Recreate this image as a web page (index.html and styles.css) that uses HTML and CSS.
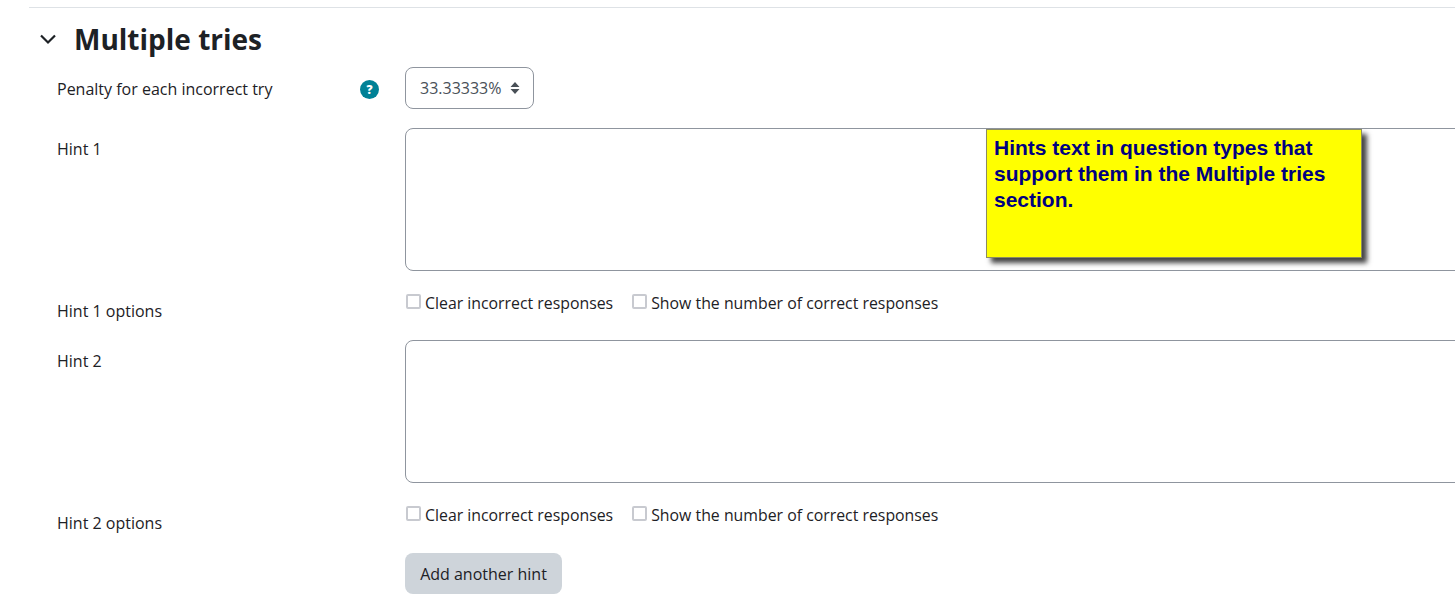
FILE: index.html
```html
<!DOCTYPE html>
<html>
<head>
	<meta charset="utf-8">
	<title>Multiple tries</title>
	<link rel="stylesheet" href="styles.css">
</head>
<body>
	<div class="section">
		<h3 class="section_head">
			<svg class="chevron" width="18" height="12" viewBox="0 0 18 12"><path d="M2 2.5 L9 9.5 L16 2.5" fill="none" stroke="#1d2125" stroke-width="2.2"/></svg>
			Multiple tries
		</h3>

		<div class="row row_penalty">
			<div class="label_col">
				<span class="penalty_text">Penalty for each incorrect try</span>
				<span class="help">?</span>
			</div>
			<div class="select_box">
				<span>33.33333%</span>
				<svg width="10" height="14" viewBox="0 0 10 14"><path d="M5 1 L9.5 6 L0.5 6 Z M5 13 L0.5 8 L9.5 8 Z" fill="#495057"/></svg>
			</div>
		</div>

		<div class="row row_hint">
			<div class="label_col label_top">Hint 1</div>
			<div class="hint_box"></div>
		</div>
		<div class="row row_options">
			<div class="label_col label_low">Hint 1 options</div>
			<div class="checks">
				<label><input type="checkbox">Clear incorrect responses</label>
				<label><input type="checkbox">Show the number of correct responses</label>
			</div>
		</div>

		<div class="row row_hint">
			<div class="label_col label_top">Hint 2</div>
			<div class="hint_box"></div>
		</div>
		<div class="row row_options">
			<div class="label_col label_low">Hint 2 options</div>
			<div class="checks">
				<label><input type="checkbox">Clear incorrect responses</label>
				<label><input type="checkbox">Show the number of correct responses</label>
			</div>
		</div>

		<div class="row row_button">
			<div class="label_col"></div>
			<button type="button" class="add_btn">Add another hint</button>
		</div>
	</div>

	<div class="note">Hints text in question types that support them in the Multiple tries section.</div>
</body>
</html>
```

FILE: styles.css
```css
html, body {
	margin: 0;
	height: 594px;
	overflow: hidden;
	background: #fff;
}
body {
	font-family: "Open Sans", "Noto Sans", sans-serif;
	font-size: 16px;
	color: #1d2125;
}
.section {
	margin: 7px 0 0 29px;
	border-top: 1px solid #dee2e6;
}
.section_head {
	display: flex;
	align-items: center;
	margin: 0;
	padding: 13px 0 0 10px;
	height: 36px;
	font-size: 28px;
	line-height: 36px;
	font-weight: 700;
}
.chevron {
	margin-right: 17px;
}
.row {
	display: flex;
	padding-left: 28px;
	width: 1500px;
}
.label_col {
	width: 322px;
	margin-right: 26px;
	flex: none;
	box-sizing: border-box;
}
.row_penalty {
	margin-top: 10px;
	height: 42px;
}
.row_penalty .label_col {
	display: flex;
	align-items: center;
	justify-content: space-between;
}
.penalty_text {
	margin-top: 2px;
}
.help {
	width: 19px;
	height: 19px;
	margin-top: 2px;
	border-radius: 50%;
	background: #008196;
	color: #fff;
	font-size: 12px;
	font-weight: 800;
	line-height: 19px;
	text-align: center;
}
.select_box {
	display: flex;
	align-items: center;
	gap: 9px;
	box-sizing: border-box;
	width: 129px;
	height: 42px;
	padding-left: 14px;
	border: 1px solid #8f959e;
	border-radius: 8px;
	color: #495057;
}
.row_hint {
	margin-top: 19px;
}
.hint_box {
	box-sizing: border-box;
	width: 1100px;
	height: 143px;
	border: 1px solid #8f959e;
	border-radius: 8px;
}
.label_top {
	padding-top: 10px;
}
.row_options {
	height: 48px;
	margin-top: 21px;
}
.row_options + .row_hint {
	margin-top: 0;
}
.label_low {
	padding-top: 8px;
}
.checks {
	display: flex;
	gap: 18px;
	font-size: 15.85px;
}
.checks label {
	display: flex;
	align-items: flex-start;
	line-height: 22px;
}
.checks input {
	appearance: none;
	box-sizing: border-box;
	width: 15px;
	height: 15px;
	margin: 2px 4px 0 1px;
	border: 2px solid #c8cad0;
	border-radius: 2px;
	background: #fff;
}
.row_button {
	margin-top: 1px;
}
.add_btn {
	box-sizing: border-box;
	width: 157px;
	height: 41px;
	border: 0;
	border-radius: 8px;
	background: #ced4da;
	color: #1d2125;
	font: inherit;
}
.note {
	position: absolute;
	left: 986px;
	top: 129px;
	box-sizing: border-box;
	width: 376px;
	height: 129px;
	padding: 5px 7px;
	background: #ffff00;
	border: 1px solid #8c8c60;
	box-shadow: 5px 5px 5px #444;
	color: #000080;
	font-family: "Liberation Sans", Arial, sans-serif;
	font-size: 21px;
	font-weight: 700;
	line-height: 26px;
}
```
